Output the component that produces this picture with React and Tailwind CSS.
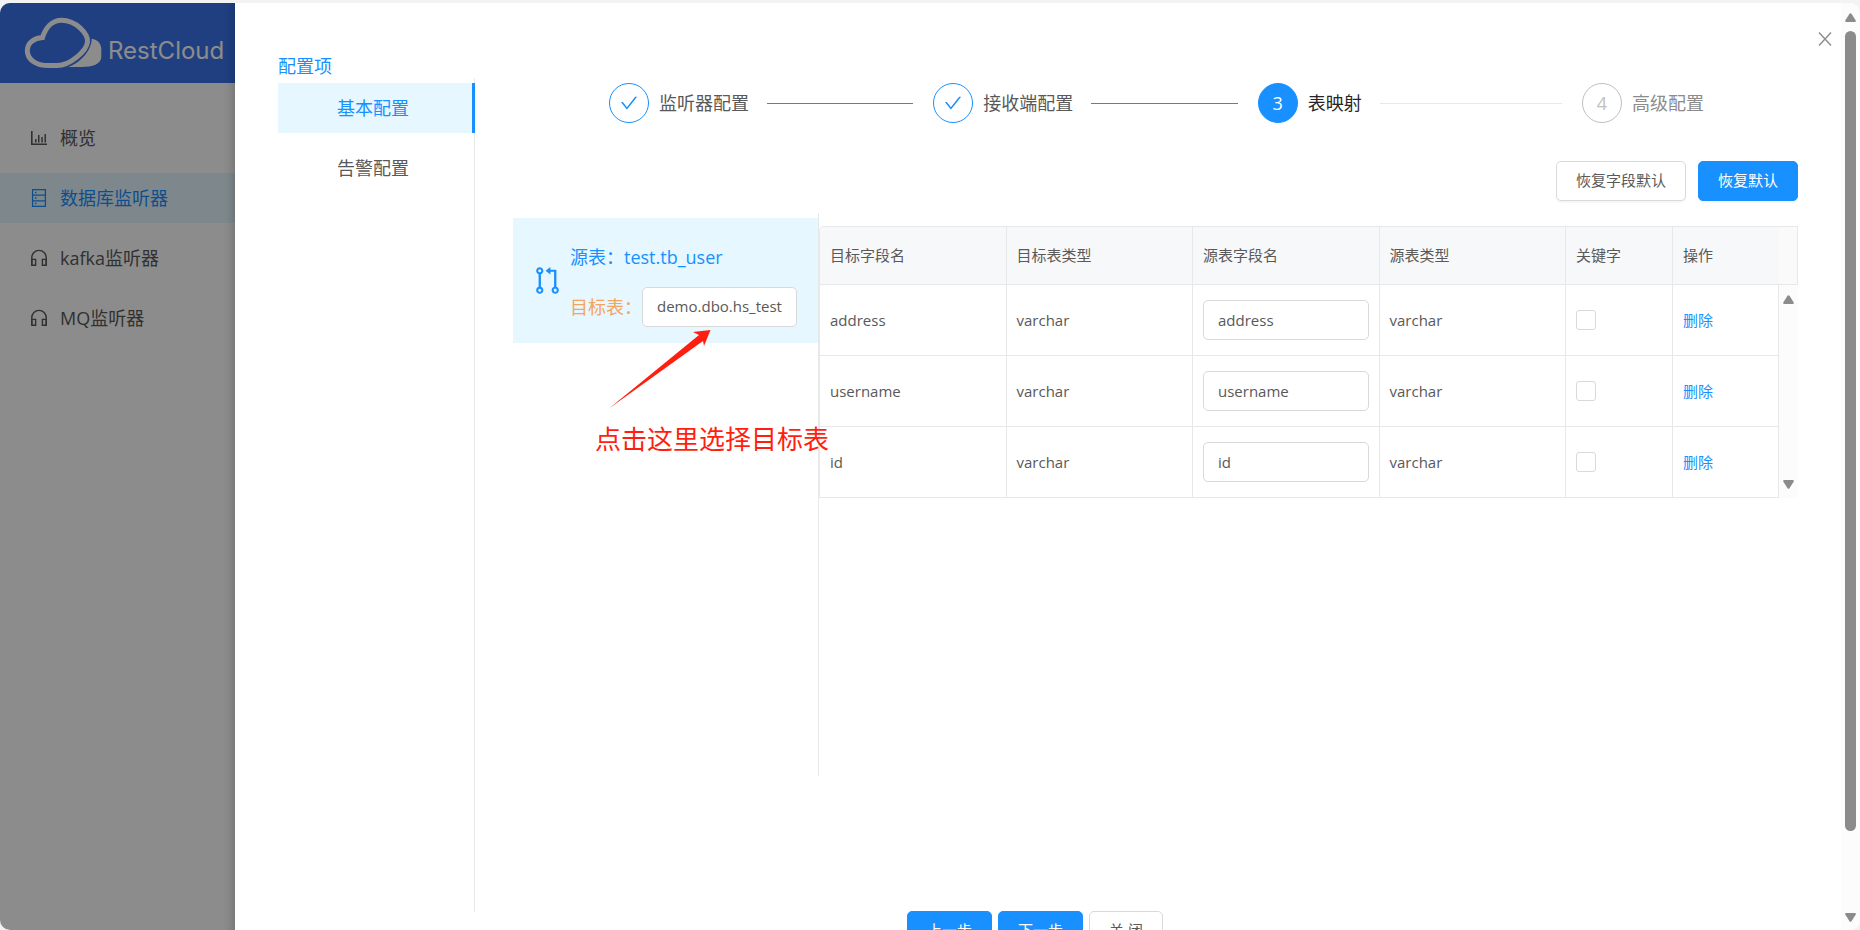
import React from 'react';
import { AiOutlineCheck, AiOutlinePullRequest } from 'react-icons/ai';

const menus = [
  { label: '概览', icon: BarChart },
  { label: '数据库监听器', icon: Database, active: true },
  { label: 'kafka监听器', icon: Headset },
  { label: 'MQ监听器', icon: Headset },
];

const steps = [
  { title: '监听器配置', status: 'finish' },
  { title: '接收端配置', status: 'finish' },
  { title: '表映射', status: 'process' },
  { title: '高级配置', status: 'wait' },
];

const stepIcon = {
  finish: 'border-[#1890ff] bg-white text-[#1890ff]',
  process: 'border-[#1890ff] bg-[#1890ff] text-white',
  wait: 'border-[#bfbfbf] bg-white text-[#bfbfbf]',
};

const stepTitle = {
  finish: 'text-[#595959]',
  process: 'text-[#262626]',
  wait: 'text-[#8c8c8c]',
};

const columns = ['目标字段名', '目标表类型', '源表字段名', '源表类型', '关键字', '操作'];
const fields = ['address', 'username', 'id'];

function BarChart() {
  return (
    <svg width="18" height="18" viewBox="0 0 18 18" fill="currentColor">
      <path d="M1 2h1.600v12.600h14.400V16H1zM5 10h1.500v3.500H5zM8 6h1.500v7.500H8zM11.300 8h1.500v5.500h-1.500zM14.500 5H16v8.500h-1.500z" />
    </svg>
  );
}

function Database() {
  return (
    <svg width="18" height="18" viewBox="0 0 18 18" fill="none" stroke="currentColor" strokeWidth="1.3">
      <path d="M2.600 .7h12.800v16.600H2.600zM2.600 6.200h12.800M2.600 11.800h12.800" />
      <path d="M5 3.500h1.500M5 9h1.500M5 14.500h1.500" />
    </svg>
  );
}

function Headset() {
  return (
    <svg width="18" height="18" viewBox="0 0 18 18" fill="none" stroke="currentColor" strokeWidth="1.4">
      <path d="M1.8 16V8.6a7.2 7.2 0 0 1 14.4 0V16" />
      <path d="M1.8 10.4h3.8v5.8H1.8zM12.4 10.4h3.8v5.8h-3.8z" />
    </svg>
  );
}

function Logo() {
  return (
    <svg width="78" height="52" viewBox="0 0 78 52" fill="none">
      <path
        d="M18.5 20.5C10 21 3.3 26 3.3 33.500C3.3 42 11 48.600 25 48.600H33C46 48.600 62.500 34 63.500 25C64.500 17 52 3.300 37.500 3.300C28 3.300 21.500 11 18.500 20.500Z"
        stroke="#fff"
        strokeWidth="5"
      />
      <path d="M67.700 21.700C74 22.500 77.300 27 77.300 32V40C77.300 47 68 50 58 50H44C56 46 67.500 34 67.700 21.700Z" fill="#fff" />
    </svg>
  );
}

function Arrow({ down }) {
  return (
    <svg className="shrink-0" width="11" height="9" viewBox="0 0 11 9" fill="#8b8b8b">
      <path d={down ? 'M1 0h9q1.500 .5 .6 1.800L6.500 8.200q-1 1.200-2 0L.4 1.800Q-.5 .5 1 0z' : 'M1 9h9q1.500-.5 .6-1.800L6.500 .8q-1-1.200-2 0L.4 7.200Q-.5 8.500 1 9z'} />
    </svg>
  );
}

function Button({ primary, children }) {
  return (
    <button
      className={`h-10 rounded-[5px] border px-[19px] pb-[2px] text-[15px] shadow-[0_2px_0_rgba(0,0,0,0.03)] ${
        primary ? 'border-[#1890ff] bg-[#1890ff] text-white' : 'border-[#d9d9d9] bg-white text-[#595959]'
      }`}
    >
      {children}
    </button>
  );
}

function Sidebar() {
  return (
    <aside className="relative w-[235px] shrink-0 overflow-hidden bg-white">
      <div className="flex h-20 items-center gap-[6px] bg-[#3a74ea] pl-6">
        <Logo />
        <span className="pt-4 font-['Inter'] text-2xl leading-8 text-white">RestCloud</span>
      </div>
      <nav className="flex flex-col gap-[10px] pt-[30px]">
        {menus.map(({ label, icon: Icon, active }) => (
          <a
            key={label}
            href="#"
            className={`flex h-[50px] items-center gap-3 pl-[30px] text-lg ${active ? 'bg-[#e6f7ff] text-[#1890ff]' : 'text-[#595959]'}`}
          >
            <Icon />
            {label}
          </a>
        ))}
      </nav>
      {/* Drawer mask */}
      <div className="absolute inset-0 bg-black/45 shadow-[inset_-12px_0_10px_-10px_rgba(0,0,0,0.2)]"></div>
    </aside>
  );
}

function Steps() {
  return (
    <ol className="flex gap-5 pl-24 pr-[94px]">
      {steps.map(({ title, status }, i) => (
        <li key={title} className={`flex items-center ${i < 3 ? 'flex-1' : ''}`}>
          <span className={`mr-[10px] flex size-10 shrink-0 items-center justify-center rounded-full border text-lg ${stepIcon[status]}`}>
            {status === 'finish' ? <AiOutlineCheck size={20} /> : i + 1}
          </span>
          <span className={`whitespace-nowrap text-lg ${stepTitle[status]}`}>{title}</span>
          {i < 3 && <span className={`ml-[18px] h-px flex-1 ${status === 'finish' ? 'bg-[#1890ff]' : 'bg-[#e8e8e8]'}`}></span>}
        </li>
      ))}
    </ol>
  );
}

function SourcePanel() {
  return (
    <div className="relative w-[306px] shrink-0 border-r border-[#e8e8e8] pt-[5px]">
      <div className="flex h-[125px] items-center bg-[#e6f7ff] pl-[18px] text-lg">
        <AiOutlinePullRequest size={33} className="shrink-0 text-[#1890ff]" />
        <div className="pl-[6px] pt-2">
          <div className="text-[#1890ff]">源表：test.tb_user</div>
          <div className="mt-4 flex items-center">
            <span className="whitespace-nowrap text-[#f4a460]">目标表：</span>
            <button className="h-10 whitespace-nowrap rounded-[5px] border border-[#d9d9d9] bg-white px-[14px] text-[15px] text-[#595959]">
              demo.dbo.hs_test
            </button>
          </div>
        </div>
      </div>

      {/* Hint */}
      <svg className="absolute left-[96px] top-[116px]" width="102" height="80" viewBox="0 0 102 80" fill="#ff1f10">
        <path d="M0 79.500L90 6L84 3L101.500 1L95 17L94 12Z" />
      </svg>
      <p className="absolute left-[82px] top-[208px] z-10 whitespace-nowrap text-[26px] leading-9 text-[#ff1f10]">点击这里选择目标表</p>
    </div>
  );
}

function MappingTable() {
  return (
    <div className="flex flex-1 pt-[13px]">
      <div className="flex-1 overflow-hidden">
        <table className="w-full table-fixed border-separate border-spacing-0 overflow-hidden rounded-tl-[5px] border-l border-t border-[#e8e8e8] text-left text-[15px] text-[#595959]">
          <colgroup>
            <col />
            <col />
            <col />
            <col />
            <col className="w-[107px]" />
            <col className="w-[106px]" />
          </colgroup>
          <thead>
            <tr>
              {columns.map((c, i) => (
                <th key={c} className={`h-[58px] border-b border-[#e8e8e8] bg-[#f7f8fa] px-[10px] font-normal ${i < 5 ? 'border-r' : ''}`}>
                  {c}
                </th>
              ))}
            </tr>
          </thead>
          <tbody className="[&_td]:h-[71px] [&_td]:border-b [&_td]:border-r [&_td]:border-[#e8e8e8] [&_td]:px-[10px]">
            {fields.map((f) => (
              <tr key={f}>
                <td>{f}</td>
                <td>varchar</td>
                <td>
                  <input aria-label={`源表字段名 ${f}`} defaultValue={f} className="h-10 w-full rounded-[5px] border border-[#d9d9d9] px-[14px]" />
                </td>
                <td>varchar</td>
                <td>
                  <input type="checkbox" aria-label={`关键字 ${f}`} className="block size-5 appearance-none rounded-[3px] border border-[#d9d9d9]" />
                </td>
                <td>
                  <a href="#" className="text-[#1890ff]">删除</a>
                </td>
              </tr>
            ))}
          </tbody>
        </table>
      </div>
      {/* Scroll gutter */}
      <div className="flex h-[272px] w-[19px] flex-col">
        <div className="h-[59px] shrink-0 border-b border-r border-t border-[#e8e8e8] bg-[#fafafa]"></div>
        <div className="flex flex-1 flex-col items-center justify-between bg-[#fcfcfc] pb-[9px] pt-[10px]">
          <Arrow />
          <Arrow down />
        </div>
      </div>
    </div>
  );
}

export default function App() {
  return (
    <div className="h-screen overflow-hidden bg-[#f3f3f3] pt-[3px] font-['Open_Sans','Noto_Sans_CJK_SC',sans-serif]">
      <div className="flex h-full overflow-hidden rounded-[10px] bg-white">
        <Sidebar />

        <main className="flex min-w-0 flex-1">
          <div className="flex min-w-0 flex-1 flex-col pl-[43px] pr-[43px]">
            <div className="flex shrink-0">
              <nav className="h-[909px] w-[197px] shrink-0 pt-[50px] text-lg leading-[26px] text-[#595959]">
                <p className="text-[#1890ff]">配置项</p>
                <div className="-mt-px flex h-[834px] flex-col gap-[10px] border-r border-[#e8e8e8] pt-[5px]">
                  <a href="#" className="-mr-px flex h-[50px] shrink-0 items-center justify-center border-r-[3px] border-[#1890ff] bg-[#e6f7ff] pr-1 text-[#1890ff]">
                    基本配置
                  </a>
                  <a href="#" className="flex h-[50px] items-center justify-center pr-[6px]">
                    告警配置
                  </a>
                </div>
              </nav>

              <section className="min-w-0 flex-1 pl-[38px] pt-20">
                <Steps />
                <div className="mt-[38px] flex justify-end gap-3">
                  <Button>恢复字段默认</Button>
                  <Button primary>恢复默认</Button>
                </div>
                <div className="mt-3 flex h-[563px]">
                  <SourcePanel />
                  <MappingTable />
                </div>
              </section>
            </div>

            <div className="-mt-px flex shrink-0 justify-center gap-[6px] pr-[6px]">
              <Button primary>上一步</Button>
              <Button primary>下一步</Button>
              <Button>关 闭</Button>
            </div>
          </div>

          <button aria-label="关闭" className="absolute right-7 top-8 text-[#8c8c8c]">
            <svg width="14" height="14" viewBox="0 0 14 14" fill="none" stroke="currentColor" strokeWidth="1.4">
              <path d="M1 .5l12 13M13 .5L1 13.500" />
            </svg>
          </button>

          {/* Page scrollbar */}
          <div className="flex w-[19px] shrink-0 flex-col items-center justify-between bg-[#fcfcfc] pb-2 pt-[10px]">
            <Arrow />
            <div className="mb-auto mt-[9px] h-[88%] w-[11px] rounded-full bg-[#8b8b8b]"></div>
            <Arrow down />
          </div>
        </main>
      </div>
    </div>
  );
}
